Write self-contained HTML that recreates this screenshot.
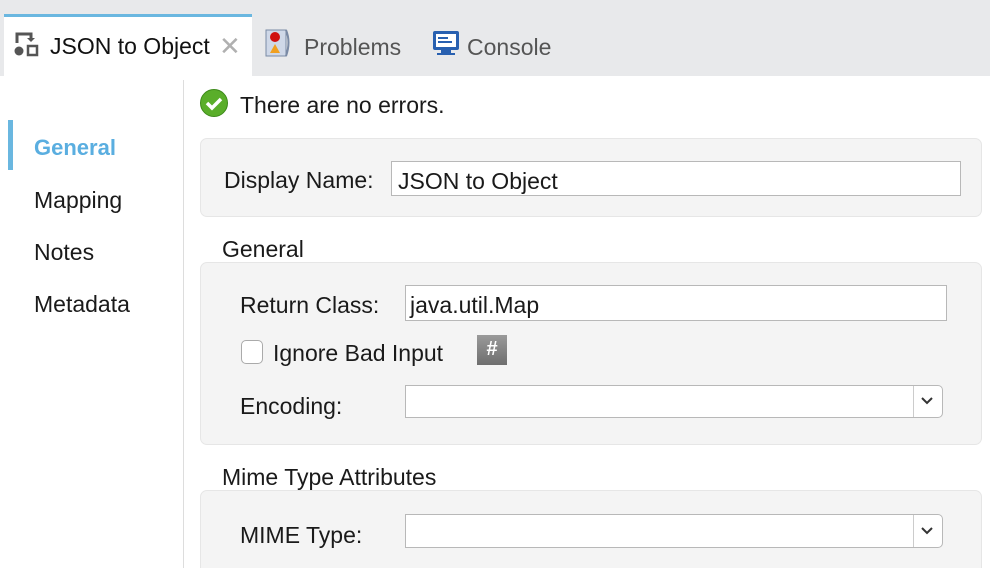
<!DOCTYPE html>
<html><head><style>
html,body{margin:0;width:990px;height:568px;overflow:hidden}
body{background:#fff;font-family:"Liberation Sans",sans-serif;font-size:23px;color:#111;position:relative}
.a{position:absolute}
.panel{position:absolute;left:200px;width:780px;background:#f4f4f4;border:1px solid #e6e6e6;border-radius:7px}
.inp{position:absolute;background:#fff;border:1px solid #b8b8b8;box-sizing:border-box}
.lbl{position:absolute;font-size:23px;color:#1a1a1a;white-space:nowrap}
</style></head><body>
<div class="a" style="left:0;top:0;width:990px;height:76px;background:#e8e9eb"></div>
<div class="a" style="left:4px;top:14px;width:248px;height:62px;background:#fff;border-top:3px solid #6ab7e0;box-sizing:border-box"></div>
<svg class="a" style="left:13px;top:30px" width="28" height="28" viewBox="0 0 28 28"><path d="M4 13V4h14v5" fill="none" stroke="#555" stroke-width="3"/><path d="M14 8l4 4 4-4z" fill="#555"/><circle cx="6" cy="21" r="4.5" fill="#555"/><rect x="15" y="16" width="9" height="9" fill="none" stroke="#555" stroke-width="2.5"/></svg>
<div class="a" style="left:50px;top:33px;font-size:23px;color:#111">JSON to Object</div>
<div class="a" style="left:219px;top:31px;font-size:26px;color:#b0b0b0">✕</div>
<svg class="a" style="left:264px;top:28px" width="30" height="30" viewBox="0 0 30 30"><rect x="2" y="2" width="20" height="26" fill="#cfd8e8" stroke="#7a8aa5"/><circle cx="11" cy="9" r="5" fill="#d01010"/><path d="M6 25l5-9 5 9z" fill="#f0a020"/><path d="M22 2q5 12 0 26" fill="none" stroke="#7a8aa5" stroke-width="2"/></svg>
<div class="a" style="left:304px;top:34px;font-size:23px;color:#555">Problems</div>
<svg class="a" style="left:432px;top:30px" width="28" height="26" viewBox="0 0 28 26"><rect x="1" y="1" width="26" height="19" rx="2" fill="#2860b0"/><rect x="4" y="4" width="20" height="13" fill="#fff"/><rect x="6" y="7" width="10" height="2" fill="#2860b0"/><rect x="6" y="11" width="14" height="2" fill="#2860b0"/><rect x="9" y="20" width="10" height="3" fill="#2860b0"/><rect x="5" y="23" width="18" height="2" fill="#2860b0"/></svg>
<div class="a" style="left:467px;top:34px;font-size:23px;color:#555">Console</div>

<div class="a" style="left:183px;top:80px;width:1px;height:488px;background:#ddd"></div>
<div class="a" style="left:8px;top:120px;width:5px;height:50px;background:#6ab7e0"></div>
<div class="lbl" style="left:34px;top:135px;color:#5aaee0;font-weight:bold;font-size:22px">General</div>
<div class="lbl" style="left:34px;top:187px">Mapping</div>
<div class="lbl" style="left:34px;top:239px">Notes</div>
<div class="lbl" style="left:34px;top:291px">Metadata</div>

<svg class="a" style="left:199px;top:88px" width="30" height="30" viewBox="0 0 30 30"><circle cx="15" cy="15" r="13.5" fill="#5aae2a" stroke="#3d8a1a"/><path d="M8 15l5 5 9-9" fill="none" stroke="#fff" stroke-width="3.5"/></svg>
<div class="lbl" style="left:240px;top:92px">There are no errors.</div>

<div class="panel" style="top:138px;height:77px"></div>
<div class="lbl" style="left:224px;top:167px">Display Name:</div>
<div class="inp" style="left:391px;top:161px;width:570px;height:35px"></div>
<div class="lbl" style="left:398px;top:168px">JSON to Object</div>

<div class="lbl" style="left:222px;top:236px">General</div>
<div class="panel" style="top:262px;height:181px"></div>
<div class="lbl" style="left:240px;top:292px">Return Class:</div>
<div class="inp" style="left:405px;top:285px;width:542px;height:36px"></div>
<div class="lbl" style="left:410px;top:292px">java.util.Map</div>
<div class="a" style="left:241px;top:340px;width:22px;height:24px;border:1px solid #aaa;border-radius:5px;background:#fff;box-sizing:border-box"></div>
<div class="lbl" style="left:273px;top:340px">Ignore Bad Input</div>
<div class="a" style="left:477px;top:335px;width:30px;height:30px;background:linear-gradient(#9a9a9a,#6e6e6e);color:#fff;font-size:20px;font-weight:bold;text-align:center;line-height:28px">#</div>
<div class="lbl" style="left:240px;top:393px">Encoding:</div>
<div class="inp" style="left:405px;top:385px;width:538px;height:33px;border-radius:0 5px 5px 0"></div>
<div class="a" style="left:913px;top:386px;width:1px;height:31px;background:#ccc"></div>
<svg class="a" style="left:920px;top:396px" width="14" height="10"><path d="M2 2l5 5 5-5" fill="none" stroke="#333" stroke-width="2"/></svg>

<div class="lbl" style="left:222px;top:464px">Mime Type Attributes</div>
<div class="panel" style="top:490px;height:100px"></div>
<div class="lbl" style="left:240px;top:522px">MIME Type:</div>
<div class="inp" style="left:405px;top:514px;width:538px;height:34px;border-radius:0 5px 5px 0"></div>
<div class="a" style="left:913px;top:515px;width:1px;height:32px;background:#ccc"></div>
<svg class="a" style="left:920px;top:526px" width="14" height="10"><path d="M2 2l5 5 5-5" fill="none" stroke="#333" stroke-width="2"/></svg>
</body></html>
